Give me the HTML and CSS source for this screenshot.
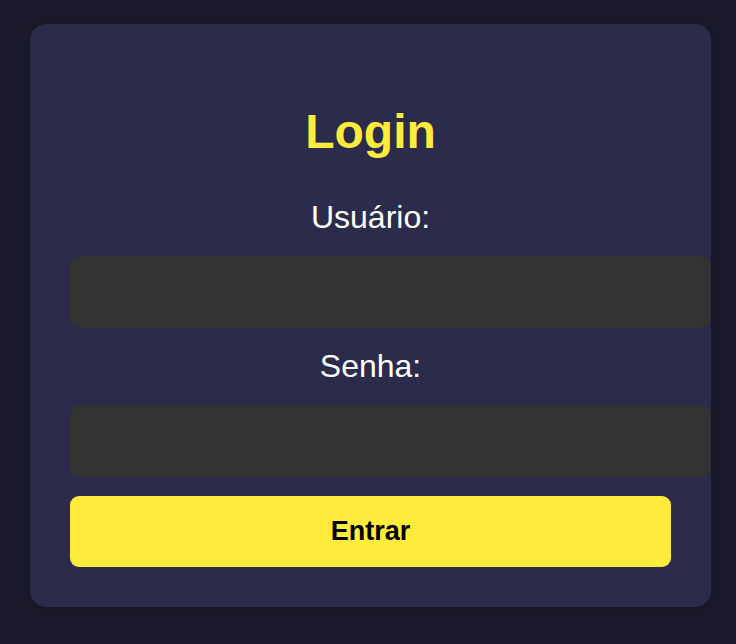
FILE: index.html
```html
<!DOCTYPE html>
<html lang="pt-BR">
<head>
<meta charset="utf-8">
<title>Login</title>
<link rel="stylesheet" href="styles.css">
</head>
<body>
<main class="page">
  <form class="card">
    <h1 class="title">Login</h1>
    <label class="label" for="user">Usuário:</label>
    <input class="field" id="user" type="text">
    <label class="label" for="pass">Senha:</label>
    <input class="field" id="pass" type="password">
    <button class="submit" type="button">Entrar</button>
  </form>
</main>
</body>
</html>
```

FILE: styles.css
```css
* {
  box-sizing: border-box;
}

html, body {
  margin: 0;
  padding: 0;
  background: #1b1b2d;
  font-family: "Liberation Sans", Arial, sans-serif;
}

.page {
  padding: 24px 25px 38px 30px;
}

.card {
  width: 681px;
  background: #2b2b4b;
  border-radius: 16px;
  padding: 40px;
  display: flex;
  flex-direction: column;
  box-shadow: 0 0 16px rgba(0, 0, 0, 0.25);
}

.title {
  margin: 40px 0 41px;
  color: #ffeb3b;
  font-size: 48px;
  line-height: 55px;
  font-weight: 700;
  text-align: center;
}

.label {
  display: block;
  color: #ffffff;
  font-size: 32px;
  line-height: 35px;
  text-align: center;
  margin-bottom: 21px;
}

.field {
  display: block;
  width: 641px;
  height: 72px;
  margin: 0 0 21px;
  padding: 0 20px;
  border: none;
  border-radius: 10px;
  background: #333333;
  color: #ffffff;
  font-size: 24px;
  font-family: inherit;
}

.submit {
  display: block;
  width: 601px;
  height: 71px;
  margin: -2px 0 0;
  border: none;
  border-radius: 9px;
  background: #ffeb3b;
  color: #000000;
  font-family: inherit;
  font-size: 27px;
  font-weight: 700;
  cursor: pointer;
}
```
